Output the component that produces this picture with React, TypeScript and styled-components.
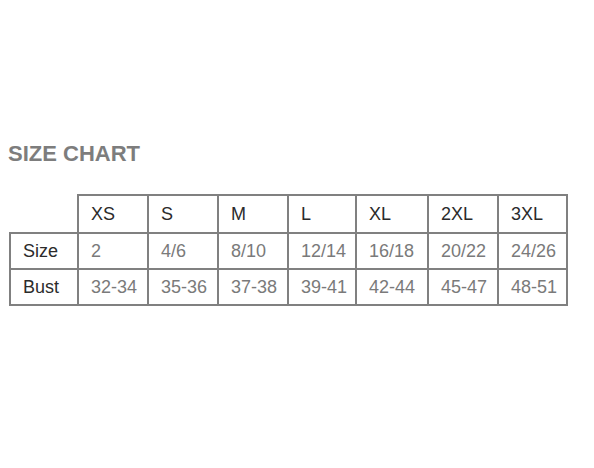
import React from "react";
import styled, { createGlobalStyle } from "styled-components";

const Global = createGlobalStyle`
  html, body { margin: 0; padding: 0; background: #ffffff; }
  body { font-family: "Liberation Sans", Arial, sans-serif; }
`;

const Page = styled.div`
  padding: 141px 8px 0 9px;
`;

const Heading = styled.h2`
  margin: 0 0 27px -1px;
  font-size: 22px;
  font-weight: bold;
  color: #7d7d7d;
  line-height: 26px;
`;

const Table = styled.table`
  border-collapse: collapse;
  table-layout: fixed;
  width: 559px;
  font-size: 18px;
`;

const Cell = styled.td<{ $head?: boolean; $label?: boolean; $blank?: boolean }>`
  border: 2px solid #808080;
  padding: 0 0 0 12px;
  text-align: left;
  font-weight: normal;
  color: ${(p) => (p.$head || p.$label ? "#2b2b2b" : "#7a7a7a")};
  ${(p) => (p.$blank ? "border-top: hidden; border-left: hidden;" : "")}
`;

const Row = styled.tr<{ $h: number }>`
  height: ${(p) => p.$h}px;
`;

const widths = [68, 70, 70, 70, 68, 72, 70, 69];
const sizes = ["XS", "S", "M", "L", "XL", "2XL", "3XL"];
const rows = [
  { label: "Size", values: ["2", "4/6", "8/10", "12/14", "16/18", "20/22", "24/26"] },
  { label: "Bust", values: ["32-34", "35-36", "37-38", "39-41", "42-44", "45-47", "48-51"] },
];

export default function App() {
  return (
    <>
      <Global />
      <Page>
        <Heading>SIZE CHART</Heading>
        <Table>
          <colgroup>
            {widths.map((w, i) => (
              <col key={i} style={{ width: w }} />
            ))}
          </colgroup>
          <tbody>
            <Row $h={38}>
              <Cell $blank />
              {sizes.map((s) => (
                <Cell key={s} $head>
                  {s}
                </Cell>
              ))}
            </Row>
            {rows.map((r) => (
              <Row key={r.label} $h={36}>
                <Cell $label>{r.label}</Cell>
                {r.values.map((v) => (
                  <Cell key={v}>{v}</Cell>
                ))}
              </Row>
            ))}
          </tbody>
        </Table>
      </Page>
    </>
  );
}
